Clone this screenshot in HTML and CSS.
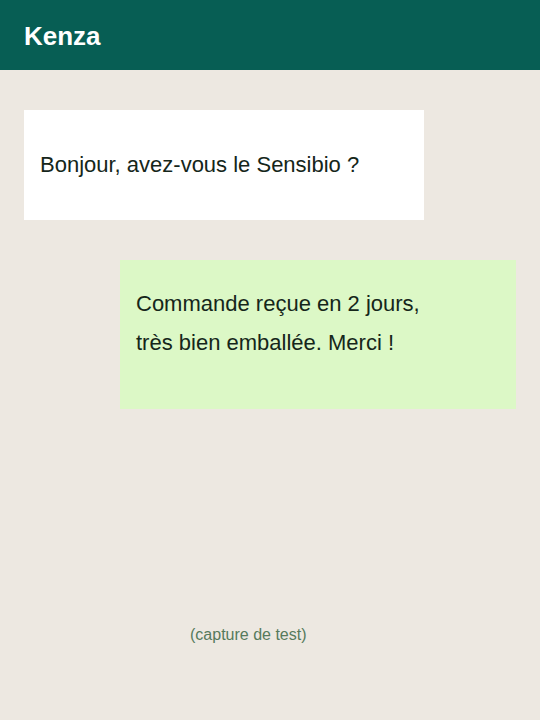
FILE: index.html
```html
<!DOCTYPE html>
<html lang="fr">
<head>
<meta charset="utf-8">
<title>Kenza</title>
<link rel="stylesheet" href="styles.css">
</head>
<body>
<header class="topbar"><h1 class="title">Kenza</h1></header>
<main class="chat">
  <div class="bubble in">Bonjour, avez-vous le Sensibio ?</div>
  <div class="bubble out">Commande reçue en 2 jours,<br>très bien emballée. Merci !</div>
</main>
<p class="note">(capture de test)</p>
</body>
</html>
```
FILE: styles.css
```css
* { box-sizing: border-box; }
html, body { margin: 0; padding: 0; }
body {
  width: 540px;
  height: 720px;
  background: #ede8e1;
  font-family: "Liberation Sans", Arial, sans-serif;
  color: #15261a;
  overflow: hidden;
}
.topbar {
  height: 70px;
  background: #075e54;
  display: flex;
  align-items: center;
  padding: 2px 24px 0;
}
.title {
  margin: 0;
  color: #ffffff;
  font-size: 26px;
  font-weight: bold;
}
.chat {
  display: flex;
  flex-direction: column;
  gap: 40px;
  padding: 40px 24px 0;
}
.bubble {
  font-size: 22px;
}
.bubble.in {
  width: 400px;
  height: 110px;
  background: #ffffff;
  padding: 0 16px;
  display: flex;
  align-items: center;
  align-self: flex-start;
}
.bubble.out {
  width: 396px;
  height: 149px;
  background: #dcf8c6;
  padding: 24px 16px 22px;
  line-height: 39px;
  align-self: flex-end;
}
.note {
  margin: 217px 0 0 190px;
  font-size: 16px;
  color: #567a5c;
}
```
